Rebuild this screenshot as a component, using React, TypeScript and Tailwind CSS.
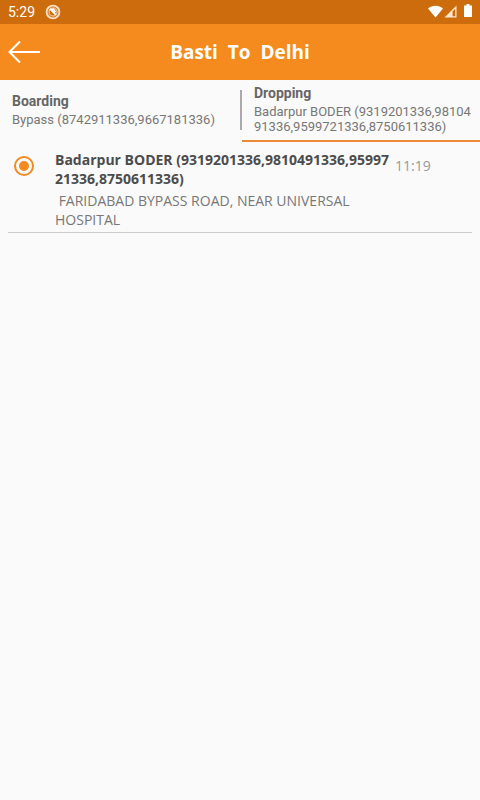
import { useState } from "react";

function StatusBar() {
  return (
    <div className="flex h-6 items-center bg-[#cd6c0d] pl-2 pr-2 text-white">
      <span className="font-['Roboto',sans-serif] text-sm leading-6">5:29</span>
      <svg className="ml-2.5 size-4" viewBox="0 0 16 16" fill="none" aria-hidden="true">
        <circle cx="8" cy="8" r="6.4" stroke="#f9dfc2" strokeWidth="1.9" />
        <circle cx="8" cy="8" r="4" stroke="#eab987" strokeWidth="1.5" />
        <path d="M5 4.800 11 10.800M6.500 5.500h2l2 2.500" stroke="#fff" strokeWidth="1.8" />
      </svg>
      <svg className="ml-auto h-4 w-[30px]" viewBox="0 0 30 16" aria-hidden="true">
        <path d="M0 4.600C4.400 0.900 10.600 0.900 15 4.600L7.500 13.400Z" fill="#fff" />
        <path d="M28.500 1.500V13.500H16.500Z" fill="#fbe6cf" />
        <path d="M24.600 7.400 27.200 4.800V12.300H24.600Z" fill="#cd6c0d" />
      </svg>
      <svg className="ml-1.5 h-4 w-2" viewBox="0 0 8 16" aria-hidden="true">
        <path d="M2.500 0h3v1.500H8V13H0V1.500h2.500Z" fill="#fff" />
      </svg>
    </div>
  );
}

type TabProps = {
  title: string;
  detail: string;
  selected: boolean;
  onSelect: () => void;
};

function StopTab({ title, detail, selected, onSelect }: TabProps) {
  return (
    <button
      type="button"
      role="tab"
      aria-selected={selected}
      onClick={onSelect}
      className={`flex h-full w-full flex-col justify-center border-b-2 pt-[3px] pr-2 pb-1.5 pl-3 text-left ${
        selected ? "border-[#ed8a35]" : "border-transparent"
      }`}
    >
      <span className="text-sm leading-5 font-bold text-[#666]">{title}</span>
      <span className="mt-px w-full text-[13px] leading-[15px] break-all text-[#777]">{detail}</span>
    </button>
  );
}

export default function App() {
  const [tab, setTab] = useState("dropping");
  return (
    <div className="min-h-screen bg-[#fafafa] font-['Open_Sans','Noto_Sans',sans-serif]">
      <StatusBar />
      <header className="grid h-14 grid-cols-[48px_1fr_48px] items-center bg-[#f58a1f] text-white">
        <button type="button" aria-label="Back" className="flex h-full items-center pl-2">
          <svg className="h-6 w-8" viewBox="0 0 32 24" fill="none" stroke="#fff" strokeWidth="2" aria-hidden="true">
            <path d="M12 1.500 1.500 12 12 22.500M1.500 12H32" />
          </svg>
        </button>
        <h1 className="text-center text-[19px] font-bold whitespace-pre">Basti  To  Delhi</h1>
      </header>
      <div role="tablist" className="grid h-[62px] grid-cols-2 font-['Roboto',sans-serif]">
        <StopTab
          title="Boarding"
          detail="Bypass (8742911336,9667181336)"
          selected={tab === "boarding"}
          onSelect={() => setTab("boarding")}
        />
        <div className="flex">
          <div className="mt-2.5 h-10 w-0.5 shrink-0 bg-[#aaa]" />
          <StopTab
            title="Dropping"
            detail="Badarpur BODER (9319201336,9810491336,9599721336,8750611336)"
            selected={tab === "dropping"}
            onSelect={() => setTab("dropping")}
          />
        </div>
      </div>
      <main className="px-2">
        <label className="flex border-b border-[#ccc] pt-2 pb-[3px]">
          <input
            type="radio"
            name="stop"
            defaultChecked
            className="m-1.5 size-5 shrink-0 appearance-none rounded-full border-2 border-[#f58a1f] bg-clip-content p-[3px] checked:bg-[#f58a1f]"
          />
          <span className="ml-[15px] min-w-0 flex-1">
            <span className="block text-sm leading-[19px] font-bold break-all text-[#4c4c4c]">
              Badarpur BODER (9319201336,9810491336,9599721336,8750611336)
            </span>
            <span className="mt-[3px] block text-sm leading-[19px] whitespace-pre-wrap text-[#777]">
              {" FARIDABAD BYPASS ROAD, NEAR UNIVERSAL HOSPITAL"}
            </span>
          </span>
          <span className="ml-0.5 w-[77px] shrink-0 pt-1.5 text-sm leading-5 text-[#999]">11:19</span>
        </label>
      </main>
    </div>
  );
}
